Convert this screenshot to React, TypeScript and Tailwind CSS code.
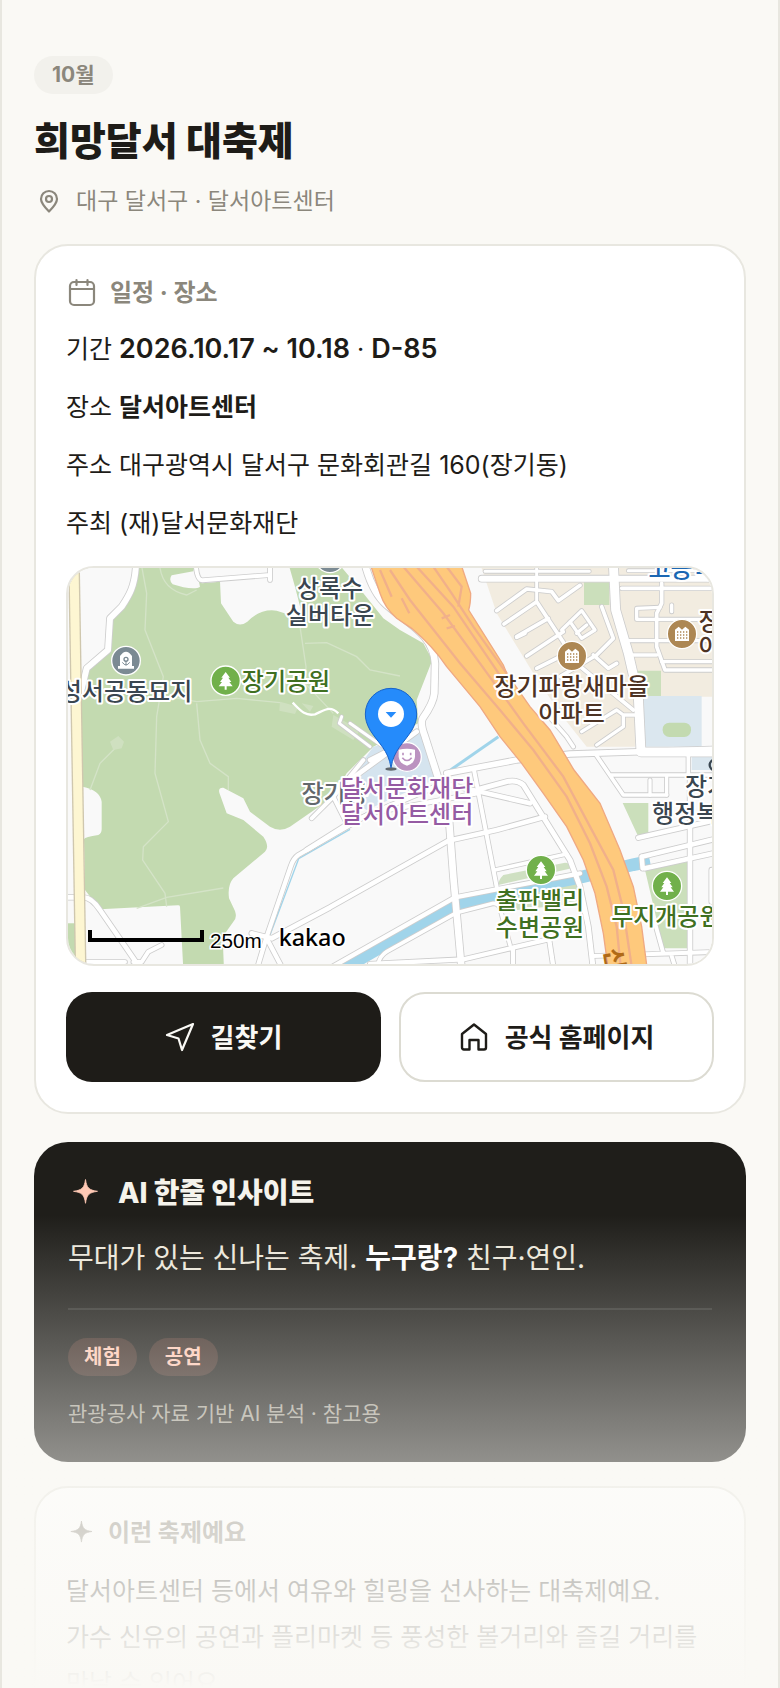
const ROWS = [
  { label: '기간', value: '2026.10.17 ~ 10.18', extra: 'D-85', kind: 'date' },
  { label: '장소', value: '달서아트센터', kind: 'strong' },
  { label: '주소', value: '대구광역시 달서구 문화회관길 160(장기동)', kind: 'plain' },
  { label: '주최', value: '(재)달서문화재단', kind: 'plain' },
]

const VALUE_STYLES: Record<string, string> = {
  date: 'text-[27px] font-semibold',
  strong: 'font-bold',
  plain: 'font-normal',
}

const TAGS = ['체험', '공연']

// Streets as [path, width]; each one is drawn twice, casing first and white on top.
const STREETS: [string, number][] = [
  // north west
  ['M258 40 C256 110 235 140 215 170 L180 205 L174 300 L110 355 L92 430', 18],
  ['M437 40 Q440 92 458 91 L660 75 M660 40 V90', 12],
  ['M30 1042 H100 Q125 1042 150 1080 L262 1242', 14],
  ['M100 1236 H225 M250 1236 H275 L295 1205 L335 1185', 12],
  ['M875 500 L868 520 L960 590 M900 520 L1000 590', 9],
  // centre
  ['M948 54 Q970 130 1010 165 C1080 225 1150 255 1155 340 L1153 430 Q1150 460 1118 505 Q1110 520 1125 560 L1195 780 L1210 980 L1235 1260', 20],
  ['M900 690 L1100 545 M960 630 L1010 605', 14],
  ['M940 630 L850 740 L785 805 M850 740 L890 820', 12],
  ['M1440 760 L1180 700 L900 818 L770 900', 14],
  ['M1280 730 L960 790 L745 915 Q730 925 722 950 L650 1160 L620 1260', 13],
  ['M1190 670 L1400 630 L1560 612 L1990 598', 17],
  ['M605 1150 L665 1165 L840 1072 L1195 872 L1340 840 L1485 800', 14],
  ['M650 1165 L700 1260', 13],
  ['M830 1260 L1215 1042 L1590 970', 13],
  ['M980 1260 Q985 1220 1010 1205 L1220 1088 L1330 1060 Q1345 1060 1350 1075 L1380 1185', 11],
  ['M1272 660 L1340 1010', 12],
  ['M1285 718 L1370 695 Q1400 688 1420 705 L1560 930 L1590 1010 L1615 1130 L1630 1260', 15],
  ['M1335 960 L1550 912', 11],
  ['M960 1242 L1240 1228 L1495 1168 M1389 1195 V1250 M1497 1165 L1510 1250', 13],
  ['M1630 1218 L1990 1206 M1815 1120 L1840 1210 M1865 1218 L1875 1250', 12],
  // apartment blocks
  ['M1295 86 H1990', 18],
  ['M1305 64 H1618 M1460 54 V150 M1735 62 H1990', 9],
  ['M1340 182 L1430 117 L1505 125 L1525 152 L1590 106', 11],
  ['M1362 222 L1460 155 L1585 345 L1750 480 M1400 260 L1495 205', 11],
  ['M1430 318 L1540 245 M1460 355 L1570 300 M1400 262 L1425 250', 11],
  ['M1535 240 L1595 182 L1635 240 L1595 265 L1560 215 M1580 250 L1610 225', 10],
  ['M1655 170 L1690 265 L1640 315 L1530 380 M1630 315 L1675 355 L1700 340', 11],
  ['M1595 545 L1700 480 L1720 495 L1720 530 L1640 585 M1720 495 H1760', 10],
  ['M1480 480 L1550 560 L1570 590', 11],
  ['M1715 115 H1990 M1835 100 V160 L1820 190 V290 L1845 360 H1990', 11],
  ['M1830 172 L1760 175 V208 H1990 M1745 315 H1820 M1735 272 H1990 M1835 335 H1990 M1865 165 V185', 10],
  ['M1690 40 L1697 180 L1735 310 L1765 440 L1773 606 H1990', 27],
  // south east
  ['M1635 610 L1720 735 H1850 M1680 675 H1990 M1915 610 V680', 11],
  ['M1800 690 V735 M1850 680 V735', 10],
  ['M1765 863 L1990 812 M1775 920 L1990 868 M1778 955 L1775 920 M1785 955 L1990 910', 14],
  ['M1920 690 V1055 M1920 1055 V1260 M1985 960 V1055', 14],
]

const TRAILS =
  'M276 54 L290 130 L285 240 L340 380 L320 500 L315 670 L355 815 L280 890 L278 930 L345 1030 L350 1070 M350 1042 L520 1014 M350 1042 L260 1075 M330 54 Q340 120 410 135 L440 120 M300 430 L440 455 L560 445 L690 458 M440 460 L450 570 L480 640 L535 680 L535 720 M750 230 L768 350 L765 400 L850 490 M765 280 L830 278 L920 320 L960 360 L1050 378 M215 575 L150 640 L120 720'

const LABEL = 'text-[72px] font-medium [paint-order:stroke] stroke-white stroke-[12px] [stroke-linejoin:round]'

function TreeMark({ x, y }: { x: number; y: number }) {
  return (
    <g transform={`translate(${x} ${y})`}>
      <circle r="44" fill="#71b04b" stroke="#fff" strokeWidth="4" />
      <path d="M0 -26 L13 -9 H8 L17 4 H11 L21 17 H3 V27 H-3 V17 H-21 L-11 4 H-17 L-8 -9 H-13 Z" fill="#fff" />
    </g>
  )
}

function AptMark({ x, y }: { x: number; y: number }) {
  return (
    <g transform={`translate(${x} ${y})`}>
      <circle r="44" fill="#ad8753" stroke="#fff" strokeWidth="4" />
      <path d="M-21 21 V-13 L-10 -22 L0 -13 L10 -22 L21 -13 V21 Z" fill="#fff" />
      <path d="M-15 -6 H16 M-15 3 H16 M-15 12 H16" stroke="#ad8753" strokeWidth="4" strokeDasharray="4 5" />
    </g>
  )
}

function VenueMap() {
  return (
    <svg
      viewBox="54 54 1932 1188"
      preserveAspectRatio="xMidYMid slice"
      className="block h-full w-full"
      role="img"
      aria-label="달서아트센터 지도"
    >
      <rect width="2100" height="1300" fill="#f9f9f9" />

      {/* park */}
      <path
        d="M268 40 H865 L940 130 L1000 205 L1050 240 L1120 280 L1147 330 L1100 450 L1105 520 L970 590 L890 670 L850 740 L800 775 L720 830 Q690 848 660 830 L600 785 L580 745 L520 713 Q504 712 508 728 L530 790 L580 810 L640 860 Q660 890 645 905 L550 985 Q532 1005 537 1045 L555 1083 Q562 1105 550 1115 L518 1160 L522 1260 H400 L390 1070 Q389 1065 383 1066 L150 1078 L105 1020 L102 868 Q105 860 145 855 Q155 850 155 838 V755 Q150 720 98 710 L92 430 L115 355 L178 300 L182 208 L235 150 Z"
        fill="#c3dab0"
      />
      <path
        d="M435 40 L450 110 Q440 118 400 112 L368 103 Q355 90 365 76 L430 64 Z M435 40 L455 100 L510 95 L513 160 L550 215 Q570 232 592 215 Q630 175 680 182 L760 208 L735 110 L715 40 Z"
        fill="#f9f9f9"
      />
      <path d={TRAILS} fill="none" stroke="#d4e3c7" strokeWidth="4" />
      <path d="M690 455 L745 470 L735 492 L688 482 Z M180 575 L205 558 L222 575 L215 595 L190 600 Z M850 495 L930 540 L910 570 L845 530 Z M755 460 L790 468 L780 485 Z" fill="#cfe0c0" />
      <path d="M40 1120 H80 V1260 H40 Z" fill="#c3dab0" />

      {/* blocks */}
      <path d="M1290 40 H2000 V440 H1780 L1755 590 H1610 L1530 490 L1450 370 L1340 190 Z" fill="#f2ece0" />
      <path d="M1602 97 H1678 V165 H1602 Z M1760 362 H1833 V438 H1760 Z M1718 759 H1795 V850 L1765 860 Z M1785 960 L1912 935 V1195 H1840 Z" fill="#cbdfbb" />
      <path d="M1360 975 Q1345 990 1345 1005 L1565 955 Q1560 938 1545 938 Z M1380 1030 L1590 1000 V1060 L1400 1080 Z" fill="#cfe0c2" />
      <path d="M1770 438 H1955 V590 H1775 Z M1925 615 H2000 V660 H1925 Z" fill="#dbe7ef" />
      <path d="M970 590 L1110 550 L1165 665 L1150 690 L950 780 L870 730 Z" fill="#d5e4ef" />
      <rect x="1838" y="518" width="85" height="43" rx="20" fill="#c3dab0" />

      {/* water */}
      <path d="M830 1285 L1080 1140 L1220 1062 L1380 1025 L1600 980 L1750 944 L1800 934" fill="none" stroke="#a0d4ea" strokeWidth="38" />
      <path d="M1345 560 L1190 668" stroke="#a0d4ea" strokeWidth="9" />
      <path d="M900 838 L746 926 L660 1155" fill="none" stroke="#a0d4ea" strokeWidth="4" />

      {/* streets */}
      <g fill="none" stroke="#cdcdcd" strokeLinecap="round" strokeLinejoin="round">
        {STREETS.map(([d, width]) => (
          <path key={d} d={d} strokeWidth={width + 5} />
        ))}
      </g>
      <g fill="none" stroke="#fff" strokeLinecap="round" strokeLinejoin="round">
        {STREETS.map(([d, width]) => (
          <path key={d} d={d} strokeWidth={width} />
        ))}
      </g>
      <path d="M728 458 C750 480 765 500 795 493 C825 480 840 465 865 490" fill="none" stroke="#fff" strokeWidth="7" />

      {/* arterial on the west edge */}
      <path d="M72 40 L92 1260" stroke="#cfc7ae" strokeWidth="35" />
      <path d="M72 40 L92 1260" stroke="#fdf6d2" strokeWidth="27" />

      {/* expressway */}
      <path
        d="M960 40 L990 130 Q1005 175 1040 205 L1085 235 Q1150 290 1190 350 L1290 470 L1350 560 L1415 640 L1480 730 L1550 830 L1600 930 L1635 1030 L1660 1150 L1675 1260 H1792 L1775 1130 L1750 1010 L1710 900 L1650 760 L1572 660 L1500 540 L1440 470 L1370 370 L1360 345 L1300 250 L1256 180 Q1262 160 1262 130 L1232 40 Z"
        fill="#fec97c"
        stroke="#efa983"
        strokeWidth="4"
      />
      <path
        d="M1020 60 L1080 150 L1230 340 L1350 480 L1450 600 L1550 740 L1620 880 L1670 1010 L1700 1130 L1712 1250 M1060 50 L1180 190 L1290 340 L1420 520 L1540 680 L1620 830 L1690 960 L1720 1080 L1745 1250 M1100 50 L1210 170 L1380 420 M1150 50 L1205 130 L1270 230 L1370 370 M1190 50 L1235 110 L1225 170 M990 60 L1025 140 M1055 145 L1078 190 M1175 205 L1200 195 M1190 235 L1215 228"
        fill="none"
        stroke="#f1b08a"
        strokeWidth="7"
      />

      {/* places */}
      <g className="font-['Noto_Sans_CJK_KR',sans-serif]" textAnchor="middle">
        <circle cx="840" cy="24" r="44" fill="#7b8a93" stroke="#fff" strokeWidth="4" />
        <g fill="#3a4650">
          <text x="840" y="141" className={LABEL}>상록수</text>
          <text x="840" y="221" className={LABEL}>실버타운</text>
          <text x="228" y="450" className={LABEL}>성서공동묘지</text>
          <text x="2004" y="736" className={LABEL}>장기동</text>
          <text x="2005" y="817" className={LABEL}>행정복지센터</text>
        </g>
        <circle cx="228" cy="332" r="43" fill="#7b8a93" stroke="#fff" strokeWidth="4" />
        <path d="M204 356 V348 H210 V318 Q228 292 246 318 V348 H252 V356 Z" fill="#fff" />
        <path d="M228 331 V346 M217 337 Q228 353 239 337" fill="none" stroke="#7b8a93" strokeWidth="3" />
        <circle cx="228" cy="328" r="6" fill="none" stroke="#7b8a93" strokeWidth="4" />

        <g fill="#3f7021">
          <text x="708" y="420" className={LABEL}>장기공원</text>
          <text x="1470" y="1078" className={LABEL}>출판밸리</text>
          <text x="1470" y="1158" className={LABEL}>수변공원</text>
          <text x="1849" y="1124" className={LABEL}>무지개공원</text>
        </g>
        <TreeMark x={527} y={392} />
        <TreeMark x={1473} y={960} />
        <TreeMark x={1851} y={1008} />

        <g fill="#4d3324">
          <text x="1565" y="435" className={LABEL}>장기파랑새마을</text>
          <text x="1565" y="515" className={LABEL}>아파트</text>
          <g textAnchor="start">
            <text x="1946" y="240" className={LABEL}>장기</text>
            <text x="1946" y="316" className={LABEL}>아파트</text>
          </g>
        </g>
        <AptMark x={1566} y={318} />
        <AptMark x={1896} y={252} />

        <text x="1895" y="80" fill="#1b67b3" className={LABEL}>고등학</text>
        <text transform="translate(1668 1232) rotate(80)" fill="#b06a17" className="text-[72px] font-bold">신</text>
        <circle cx="1995" cy="645" r="16" fill="none" stroke="#3a4650" strokeWidth="7" />

        <text x="854" y="756" fill="#63686d" className={LABEL}>장기동</text>
        <g fill="#955ba3">
          <text x="1071" y="741" className={LABEL}>달서문화재단</text>
          <text x="1071" y="819" className={LABEL}>달서아트센터</text>
        </g>
      </g>

      {/* venue badge and pin */}
      <circle cx="1071" cy="621" r="43" fill="#bb92c0" stroke="#fff" strokeWidth="4" />
      <path d="M1046 599 Q1071 594 1095 599 V620 Q1092 642 1071 647 Q1049 642 1046 620 Z" fill="#fff" />
      <path d="M1059 608 V616 M1082 608 V616 M1057 623 Q1071 640 1085 623" fill="none" stroke="#bb92c0" strokeWidth="5" />
      <ellipse cx="1023" cy="657" rx="17" ry="5" fill="#000" opacity="0.55" />
      <path
        d="M1023 653 C1015 600 985 580 960 540 C950 522 946 508 946 492 A77 77 0 0 1 1100 492 C1100 508 1096 522 1086 540 C1061 580 1031 600 1023 653 Z"
        fill="#258bfb"
        stroke="#1763c9"
        strokeWidth="3"
      />
      <circle cx="1023" cy="492" r="39" fill="#fff" />
      <path d="M1007 486 H1039 L1023 503 Z" fill="#258bfb" />

      {/* scale */}
      <path d="M120 1140 V1170 H456 V1140" fill="none" stroke="#000" strokeWidth="12" />
      <text x="480" y="1194" className="font-['Liberation_Sans',sans-serif] text-[62px] [paint-order:stroke] stroke-white stroke-[9px]">250m</text>
      <text x="686" y="1187" className="font-['Noto_Sans',sans-serif] text-[70px] font-medium [paint-order:stroke] stroke-white stroke-[9px]">kakao</text>
    </svg>
  )
}

function Sparkle({ className }: { className: string }) {
  return (
    <svg viewBox="0 0 34 34" className={className} fill="currentColor" aria-hidden="true">
      <path d="M17.500 3.500 C18.800 12 20.800 14 29.500 15.300 C20.800 16.600 18.800 18.600 17.500 27.300 C16.200 18.600 14.200 16.600 5.500 15.300 C14.200 14 16.200 12 17.500 3.500 Z" stroke="currentColor" strokeWidth="0.8" strokeLinejoin="round" />
    </svg>
  )
}

export default function App() {
  return (
    <main className="relative h-screen overflow-hidden border-x-2 border-[#e8e7e0] bg-[#faf9f5] px-8 pt-14 font-['Inter','Noto_Sans_CJK_KR',sans-serif] text-[#1e1c18]">
      <header className="mb-[26px]">
        <span className="inline-flex h-[38px] items-center rounded-full bg-[#f2f1ec] px-[18px] align-top text-[21px] font-bold text-[#8b877c]">
          10월
        </span>
        <h1 className="mt-5 text-[39px] leading-[54px] font-extrabold">희망달서 대축제</h1>
        <p className="mt-4 flex h-[34px] items-center gap-3 text-[23px] text-[#8b877c]">
          <svg viewBox="0 0 30 30" className="size-[30px]" fill="none" stroke="currentColor" strokeWidth="2.2" strokeLinejoin="round" aria-hidden="true">
            <path d="M15 25.500 C10 20.500 7 17 7 13 A8 8 0 0 1 23 13 C23 17 20 20.500 15 25.500 Z" />
            <circle cx="15" cy="13" r="3" />
          </svg>
          대구 달서구 · 달서아트센터
        </p>
      </header>

      <section className="rounded-[34px] border-2 border-[#e8e7e0] bg-white p-[30px]">
        <h2 className="mb-4 flex h-[34px] items-center gap-3 text-2xl font-bold text-[#8b877c]">
          <svg viewBox="0 0 32 32" className="size-8" fill="none" stroke="currentColor" strokeWidth="2.2" strokeLinecap="round" aria-hidden="true">
            <rect x="4" y="5" width="24" height="23" rx="4" />
            <path d="M4 12 H28 M10.500 3 V8 M21.500 3 V8" />
          </svg>
          일정 · 장소
        </h2>
        <div className="flex flex-col gap-3 text-[25px] leading-[46px]">
          {ROWS.map((row) => (
            <p key={row.label}>
              {row.label} <b className={VALUE_STYLES[row.kind]}>{row.value}</b>
              {row.extra && (
                <>
                  {' · '}
                  <b className={VALUE_STYLES[row.kind]}>{row.extra}</b>
                </>
              )}
            </p>
          ))}
        </div>
        <div className="mt-5 h-[400px] overflow-hidden rounded-[28px] border-2 border-[#e8e7e0]">
          <VenueMap />
        </div>
        <div className="mt-[26px] grid grid-cols-2 gap-[18px]">
          <button type="button" className="flex h-[90px] items-center justify-center gap-4 rounded-[26px] bg-[#1e1c18] text-[26px] font-bold text-[#faf9f5]">
            <svg viewBox="0 0 30 30" className="size-[30px]" fill="none" stroke="currentColor" strokeWidth="2.2" strokeLinejoin="round" aria-hidden="true">
              <path d="M28 2 L2 13 L13.500 16.500 L17 28 Z" />
            </svg>
            길찾기
          </button>
          <a href="#home" className="flex h-[90px] items-center justify-center gap-4 rounded-[26px] border-2 border-[#dcdbd2] bg-white text-[26px] font-bold">
            <svg viewBox="0 0 30 30" className="size-[30px]" fill="none" stroke="currentColor" strokeWidth="2.4" strokeLinejoin="round" aria-hidden="true">
              <path d="M3 12 L15 2.500 L27 12 V25.500 Q27 27.500 25 27.500 H19.500 V18 H10.500 V27.500 H5 Q3 27.500 3 25.500 Z" />
            </svg>
            공식 홈페이지
          </a>
        </div>
      </section>

      <section className="mt-7 rounded-[34px] bg-[#1f1e1a] p-[34px]">
        <h2 className="flex h-[34px] items-center gap-4 text-[28px] font-extrabold text-[#f5f3ec]">
          <Sparkle className="size-[34px] text-[#ffc9b5]" />
          AI 한줄 인사이트
        </h2>
        <p className="mt-6 border-b-2 border-white/10 pb-[26px] text-[28px] leading-[48px] text-[#ece7da]">
          무대가 있는 신나는 축제. <b className="font-bold text-white">누구랑?</b> 친구·연인.
        </p>
        <ul className="mt-7 flex gap-3">
          {TAGS.map((tag) => (
            <li key={tag} className="flex h-[38px] items-center rounded-full bg-[#ff9678]/15 px-4 text-xl font-semibold text-[#ffc9b5]">
              {tag}
            </li>
          ))}
        </ul>
        <p className="mt-6 text-[21px] leading-7 text-[#a5a195]">관광공사 자료 기반 AI 분석 · 참고용</p>
      </section>

      <section className="mt-6 rounded-[34px] border-2 border-[#e8e7e0] bg-white p-[30px]">
        <h2 className="mb-5 flex h-[30px] items-center gap-3 text-2xl font-bold text-[#8b877c]">
          <Sparkle className="size-[30px]" />
          이런 축제예요
        </h2>
        <p className="text-[25px] leading-[46px]">
          달서아트센터 등에서 여유와 힐링을 선사하는 대축제예요.
          <br />
          가수 신유의 공연과 플리마켓 등 풍성한 볼거리와 즐길 거리를 만날 수 있어요.
        </p>
      </section>

      <div className="pointer-events-none absolute inset-x-[-2px] bottom-0 h-[28%] bg-linear-to-b from-[#faf9f5]/0 to-[#faf9f5]" />
    </main>
  )
}
